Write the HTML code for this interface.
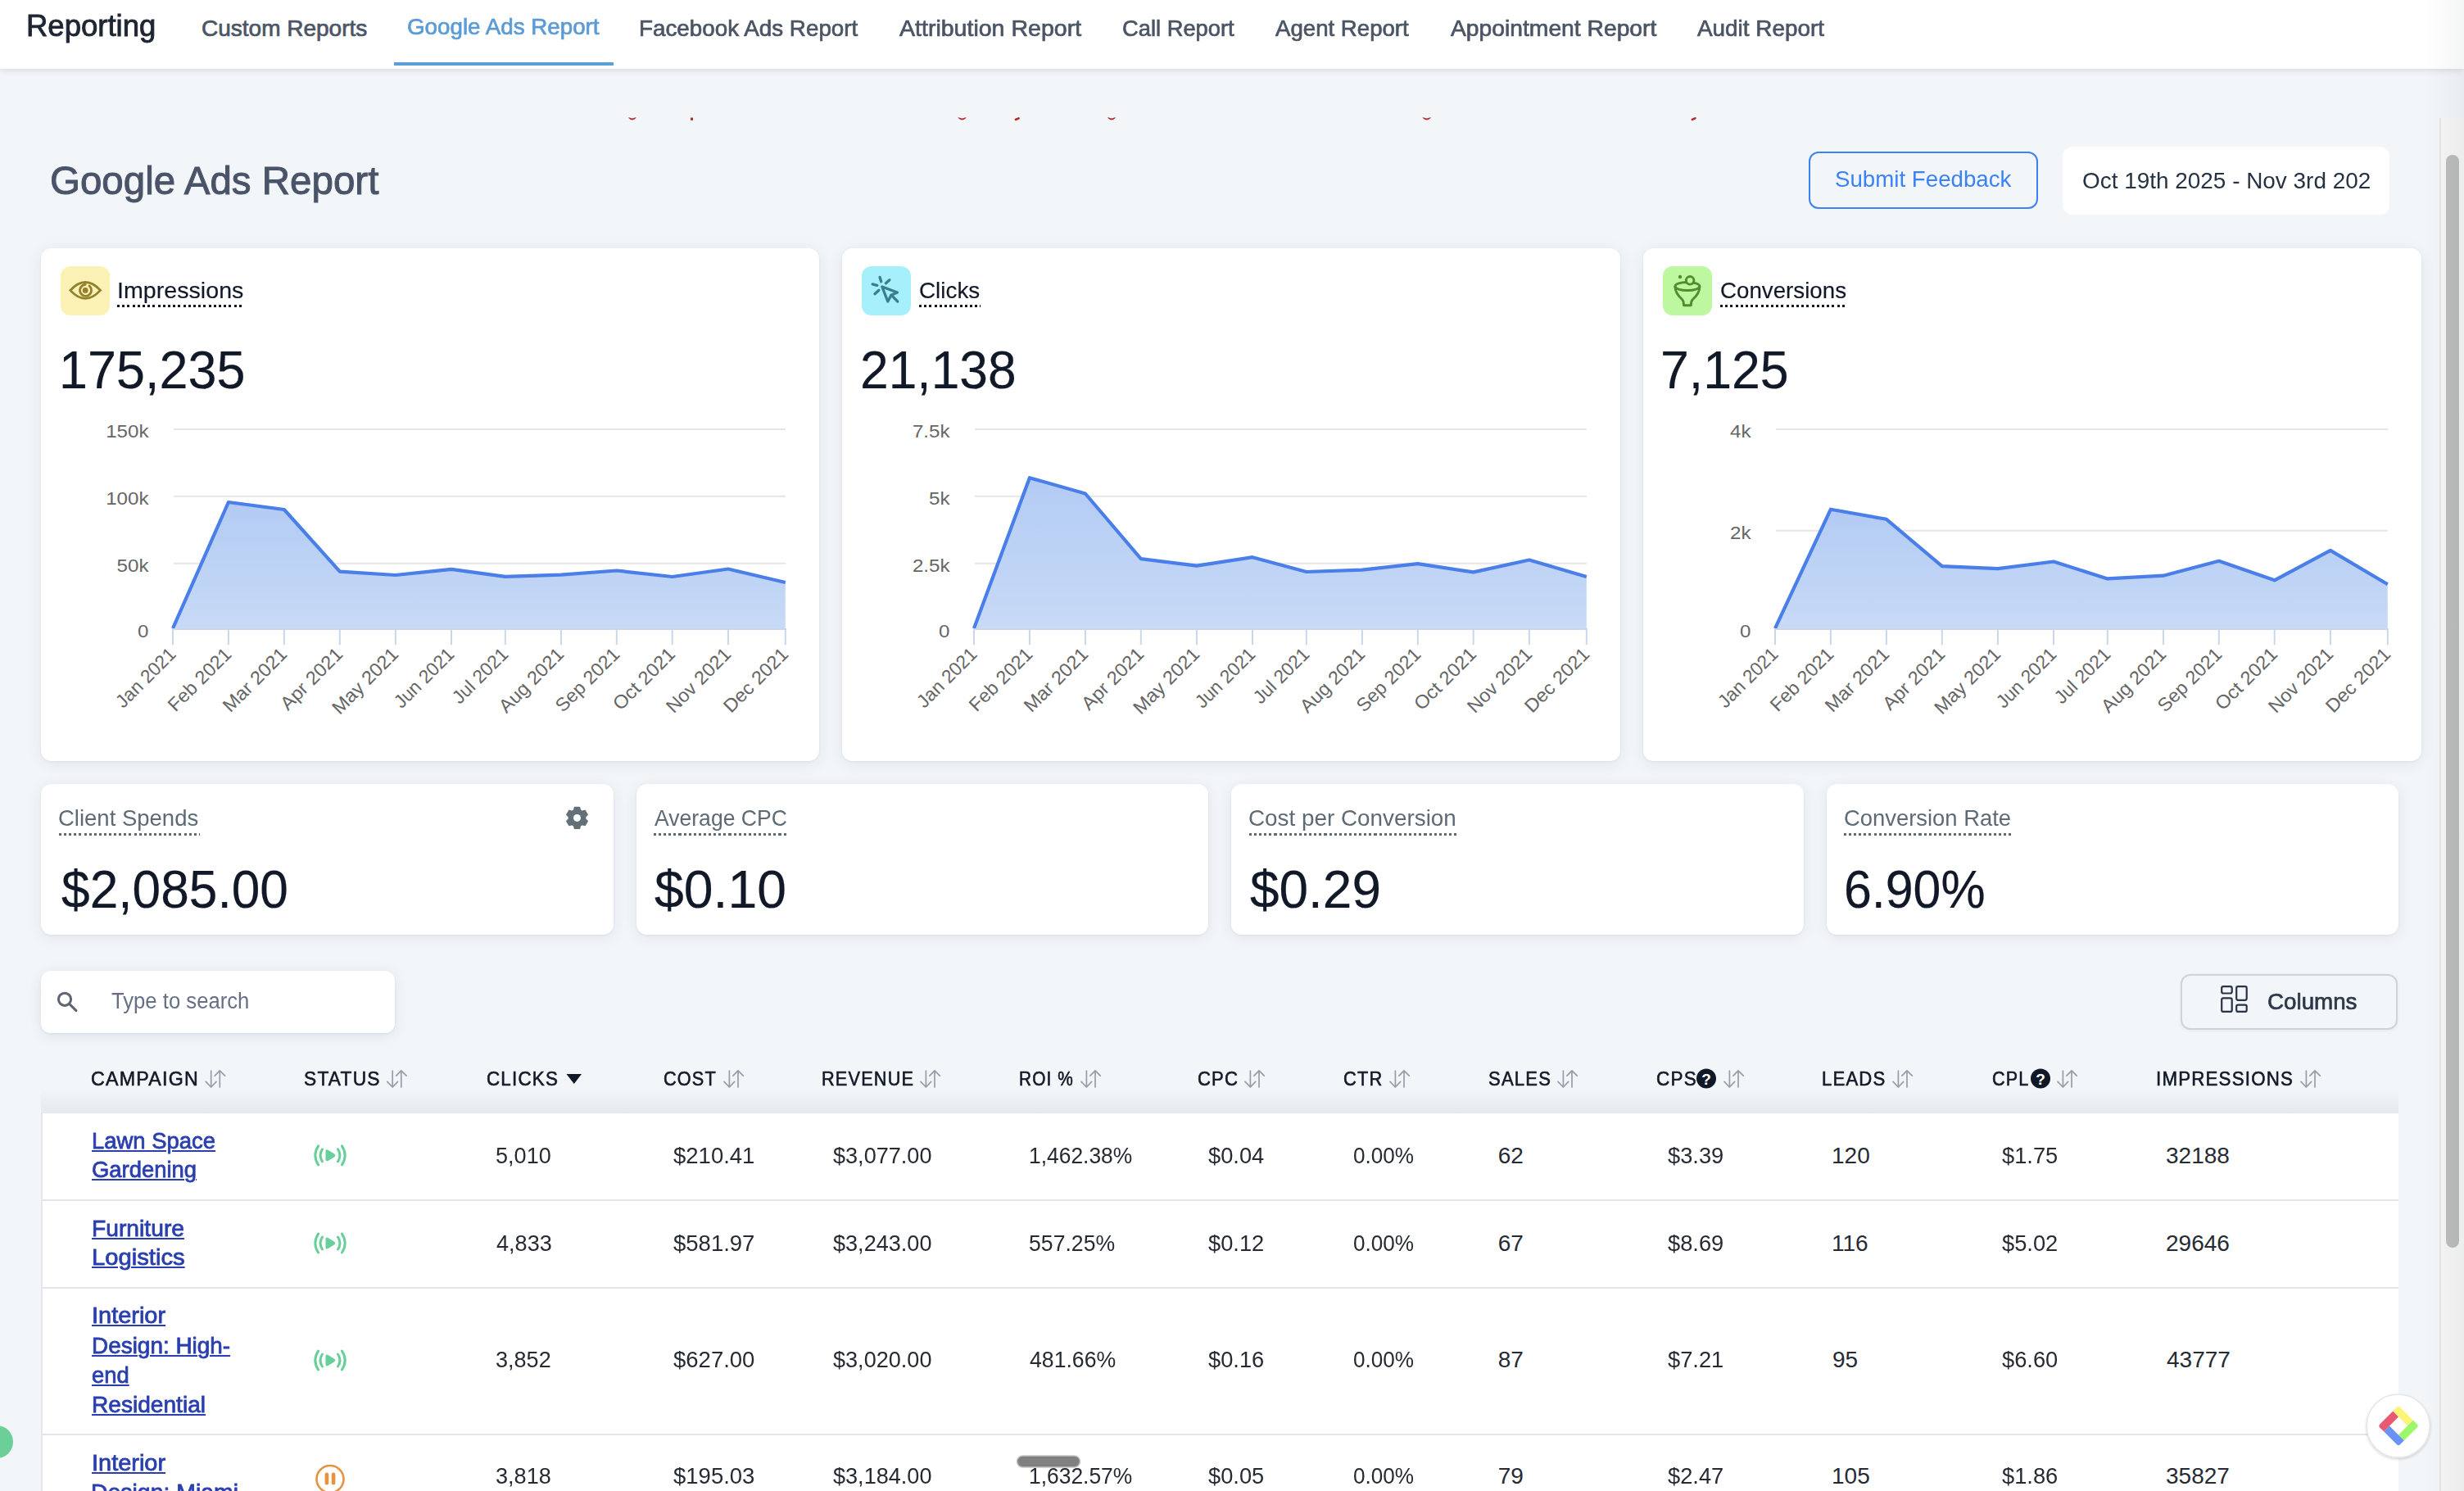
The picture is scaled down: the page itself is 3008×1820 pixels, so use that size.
<!DOCTYPE html>
<html><head><meta charset="utf-8"><title>Google Ads Report</title>
<style>
html,body{margin:0;padding:0;}
body{width:3008px;height:1820px;overflow:hidden;position:relative;background:#f2f6f9;font-family:"Liberation Sans", sans-serif;}
.t{position:absolute;white-space:nowrap;}
.r{position:absolute;}
</style></head>
<body>
<div class="r" style="left:0px;top:0px;width:3008px;height:84px;background:#fff;box-shadow:0 2px 8px rgba(30,40,60,0.13);z-index:2;"></div>
<div style="position:absolute;left:0;top:0;width:3008px;height:84px;z-index:3">
<div id="h_rep" class="t" style="left:31.98px;top:13.73px;font-size:36px;line-height:36px;color:#1e2633;font-weight:400;-webkit-text-stroke:0.9px #1e2633;transform:scaleX(1.0144);transform-origin:0 0;">Reporting</div>
<div id="nav0" class="t" style="left:246.00px;top:21.30px;font-size:28px;line-height:28px;color:#4b5565;font-weight:400;-webkit-text-stroke:0.7px #4b5565;">Custom Reports</div>
<div id="nav1" class="t" style="left:497.01px;top:19.30px;font-size:28px;line-height:28px;color:#5b9bd5;font-weight:400;-webkit-text-stroke:0.7px #5b9bd5;transform:scaleX(0.9915);transform-origin:0 0;">Google Ads Report</div>
<div id="nav2" class="t" style="left:780.01px;top:21.30px;font-size:28px;line-height:28px;color:#4b5565;font-weight:400;-webkit-text-stroke:0.7px #4b5565;transform:scaleX(0.9926);transform-origin:0 0;">Facebook Ads Report</div>
<div id="nav3" class="t" style="left:1098.21px;top:21.30px;font-size:28px;line-height:28px;color:#4b5565;font-weight:400;-webkit-text-stroke:0.7px #4b5565;transform:scaleX(1.0192);transform-origin:0 0;">Attribution Report</div>
<div id="nav4" class="t" style="left:1370.00px;top:21.30px;font-size:28px;line-height:28px;color:#4b5565;font-weight:400;-webkit-text-stroke:0.7px #4b5565;transform:scaleX(0.9759);transform-origin:0 0;">Call Report</div>
<div id="nav5" class="t" style="left:1557.38px;top:21.30px;font-size:28px;line-height:28px;color:#4b5565;font-weight:400;-webkit-text-stroke:0.7px #4b5565;transform:scaleX(0.9862);transform-origin:0 0;">Agent Report</div>
<div id="nav6" class="t" style="left:1770.79px;top:21.30px;font-size:28px;line-height:28px;color:#4b5565;font-weight:400;-webkit-text-stroke:0.7px #4b5565;transform:scaleX(1.0092);transform-origin:0 0;">Appointment Report</div>
<div id="nav7" class="t" style="left:2072.38px;top:21.30px;font-size:28px;line-height:28px;color:#4b5565;font-weight:400;-webkit-text-stroke:0.7px #4b5565;transform:scaleX(0.9956);transform-origin:0 0;">Audit Report</div>
<div class="r" style="left:481px;top:76px;width:268px;height:4px;background:#5b9fd9;"></div>
</div>
<svg class="r" style="left:0;top:0;width:3008px;height:160px" viewBox="0 0 3008 160"><path d="M766.8 143.6 Q771.9 149.2 777 143.6 L774.8 143.6 Q771.9 145.6 769.0 143.6 Z" fill="#b9292c"/><rect x="843" y="143.6" width="3" height="3.3" fill="#b9292c"/><path d="M1169 143.6 Q1174.5 149.2 1180 143.6 L1177.8 143.6 Q1174.5 145.6 1171.2 143.6 Z" fill="#b9292c"/><path d="M1239.9 146.0 L1243.6 144.4" stroke="#b9292c" stroke-width="2.6" stroke-linecap="round" fill="none"/><path d="M1351.7 143.6 Q1357.0500000000002 149.2 1362.4 143.6 L1360.2 143.6 Q1357.0500000000002 145.6 1353.9 143.6 Z" fill="#b9292c"/><path d="M1736.2 143.6 Q1741.75 149.2 1747.3 143.6 L1745.1 143.6 Q1741.75 145.6 1738.4 143.6 Z" fill="#b9292c"/><path d="M2065.7999999999997 146.0 L2069.4 144.4" stroke="#b9292c" stroke-width="2.6" stroke-linecap="round" fill="none"/></svg>
<div id="title" class="t" style="left:61.01px;top:196.57px;font-size:48px;line-height:48px;color:#4a5468;font-weight:400;-webkit-text-stroke:1.0px #4a5468;transform:scaleX(0.9896);transform-origin:0 0;">Google Ads Report</div>
<div class="r" style="left:2208px;top:185px;width:280px;height:70px;box-sizing:border-box;border:2px solid #3b82f6;border-radius:12px;"></div>
<div id="submit" class="t" style="left:2240.01px;top:205.20px;font-size:28px;line-height:28px;color:#3b82f6;font-weight:400;transform:scaleX(0.9885);transform-origin:0 0;">Submit Feedback</div>
<div class="r" style="left:2518px;top:179px;width:399px;height:83px;background:#fff;border-radius:12px;"></div>
<div style="position:absolute;left:2518px;top:179px;width:376px;height:83px;overflow:hidden">
<div id="date" class="t" style="left:24.00px;top:28.30px;font-size:28px;line-height:28px;color:#243244;font-weight:400;transform:scaleX(0.997);transform-origin:0 0;">Oct 19th 2025 - Nov 3rd 2025</div>
</div>
<div class="r" style="left:2960px;top:0px;width:48px;height:1820px;background:linear-gradient(90deg,rgba(0,0,0,0) 0%,rgba(20,30,50,0.045) 100%);z-index:4;"></div>
<div class="r" style="left:2978px;top:144px;width:30px;height:1676px;background:#f6f6f6;border-left:2px solid #e6e6e6;box-sizing:border-box;"></div>
<div class="r" style="left:2986px;top:189px;width:16px;height:1334px;background:#bdbdbd;border-radius:8px;"></div>
<div class="r" style="left:50px;top:303px;width:950px;height:626px;background:#fff;border-radius:13px;box-shadow:0 1px 3px rgba(30,45,70,0.05),0 3px 18px rgba(30,45,70,0.085);"></div>
<div class="r" style="left:74px;top:325px;width:60px;height:60px;background:#fdf2b6;border-radius:12px;"></div>
<div id="ct0" class="t" style="left:142.75px;top:340.70px;font-size:28px;line-height:28px;color:#111827;font-weight:400;-webkit-text-stroke:0.15px #111827;transform:scaleX(1.0228);transform-origin:0 0;">Impressions</div>
<div class="r" style="left:143.4px;top:372.3px;width:154.4px;height:3px;background:repeating-linear-gradient(90deg,#111827 0 3px,transparent 3px 6.2px);"></div>
<div id="cn0" class="t" style="left:72.07px;top:420.02px;font-size:64px;line-height:64px;color:#111827;font-weight:400;-webkit-text-stroke:0.2px #111827;transform:scaleX(0.9836);transform-origin:0 0;">175,235</div>
<div class="r" style="left:1028px;top:303px;width:950px;height:626px;background:#fff;border-radius:13px;box-shadow:0 1px 3px rgba(30,45,70,0.05),0 3px 18px rgba(30,45,70,0.085);"></div>
<div class="r" style="left:1052px;top:325px;width:60px;height:60px;background:#a6f0fb;border-radius:12px;"></div>
<div id="ct1" class="t" style="left:1122.39px;top:340.70px;font-size:28px;line-height:28px;color:#111827;font-weight:400;-webkit-text-stroke:0.15px #111827;transform:scaleX(0.9945);transform-origin:0 0;">Clicks</div>
<div class="r" style="left:1122.2px;top:372.3px;width:74.59999999999991px;height:3px;background:repeating-linear-gradient(90deg,#111827 0 3px,transparent 3px 6.2px);"></div>
<div id="cn1" class="t" style="left:1050.08px;top:420.02px;font-size:64px;line-height:64px;color:#111827;font-weight:400;-webkit-text-stroke:0.2px #111827;transform:scaleX(0.9743);transform-origin:0 0;">21,138</div>
<div class="r" style="left:2006px;top:303px;width:950px;height:626px;background:#fff;border-radius:13px;box-shadow:0 1px 3px rgba(30,45,70,0.05),0 3px 18px rgba(30,45,70,0.085);"></div>
<div class="r" style="left:2030px;top:325px;width:60px;height:60px;background:#bdf79f;border-radius:12px;"></div>
<div id="ct2" class="t" style="left:2100.01px;top:340.70px;font-size:28px;line-height:28px;color:#111827;font-weight:400;-webkit-text-stroke:0.15px #111827;transform:scaleX(0.9896);transform-origin:0 0;">Conversions</div>
<div class="r" style="left:2100px;top:372.3px;width:154.4000000000001px;height:3px;background:repeating-linear-gradient(90deg,#111827 0 3px,transparent 3px 6.2px);"></div>
<div id="cn2" class="t" style="left:2027.45px;top:420.02px;font-size:64px;line-height:64px;color:#111827;font-weight:400;-webkit-text-stroke:0.2px #111827;transform:scaleX(0.9781);transform-origin:0 0;">7,125</div>
<div class="r" style="left:50px;top:957px;width:698.5px;height:184px;background:#fff;border-radius:13px;box-shadow:0 1px 3px rgba(30,45,70,0.05),0 3px 18px rgba(30,45,70,0.085);"></div>
<div id="sl0" class="t" style="left:71.41px;top:985.20px;font-size:28px;line-height:28px;color:#5e6b75;font-weight:400;transform:scaleX(0.9821);transform-origin:0 0;">Client Spends</div>
<div class="r" style="left:72.2px;top:1016.8px;width:171.89999999999998px;height:3px;background:repeating-linear-gradient(90deg,#5e6b75 0 3px,transparent 3px 6.1px);"></div>
<div id="sv0" class="t" style="left:75.00px;top:1053.52px;font-size:64px;line-height:64px;color:#111827;font-weight:400;-webkit-text-stroke:0.2px #111827;transform:scaleX(0.9728);transform-origin:0 0;">$2,085.00</div>
<div class="r" style="left:776.5px;top:957px;width:698.5px;height:184px;background:#fff;border-radius:13px;box-shadow:0 1px 3px rgba(30,45,70,0.05),0 3px 18px rgba(30,45,70,0.085);"></div>
<div id="sl1" class="t" style="left:798.97px;top:985.20px;font-size:28px;line-height:28px;color:#5e6b75;font-weight:400;transform:scaleX(0.9482);transform-origin:0 0;">Average CPC</div>
<div class="r" style="left:798.0px;top:1016.8px;width:163.20000000000005px;height:3px;background:repeating-linear-gradient(90deg,#5e6b75 0 3px,transparent 3px 6.1px);"></div>
<div id="sv1" class="t" style="left:799.39px;top:1053.52px;font-size:64px;line-height:64px;color:#111827;font-weight:400;-webkit-text-stroke:0.2px #111827;transform:scaleX(1.0051);transform-origin:0 0;">$0.10</div>
<div class="r" style="left:1503px;top:957px;width:698.5px;height:184px;background:#fff;border-radius:13px;box-shadow:0 1px 3px rgba(30,45,70,0.05),0 3px 18px rgba(30,45,70,0.085);"></div>
<div id="sl2" class="t" style="left:1524.01px;top:985.20px;font-size:28px;line-height:28px;color:#5e6b75;font-weight:400;transform:scaleX(0.9945);transform-origin:0 0;">Cost per Conversion</div>
<div class="r" style="left:1524.5px;top:1016.8px;width:253.5999999999999px;height:3px;background:repeating-linear-gradient(90deg,#5e6b75 0 3px,transparent 3px 6.1px);"></div>
<div id="sv2" class="t" style="left:1526.00px;top:1053.52px;font-size:64px;line-height:64px;color:#111827;font-weight:400;-webkit-text-stroke:0.2px #111827;transform:scaleX(0.9987);transform-origin:0 0;">$0.29</div>
<div class="r" style="left:2229.5px;top:957px;width:698.5px;height:184px;background:#fff;border-radius:13px;box-shadow:0 1px 3px rgba(30,45,70,0.05),0 3px 18px rgba(30,45,70,0.085);"></div>
<div id="sl3" class="t" style="left:2251.01px;top:985.20px;font-size:28px;line-height:28px;color:#5e6b75;font-weight:400;transform:scaleX(0.9783);transform-origin:0 0;">Conversion Rate</div>
<div class="r" style="left:2251.0px;top:1016.8px;width:204.5px;height:3px;background:repeating-linear-gradient(90deg,#5e6b75 0 3px,transparent 3px 6.1px);"></div>
<div id="sv3" class="t" style="left:2250.50px;top:1053.52px;font-size:64px;line-height:64px;color:#111827;font-weight:400;-webkit-text-stroke:0.2px #111827;transform:scaleX(0.9508);transform-origin:0 0;">6.90%</div>
<div class="r" style="left:50px;top:1185px;width:432px;height:76px;background:#fff;border-radius:12px;box-shadow:0 1px 3px rgba(30,45,70,0.06),0 3px 16px rgba(30,45,70,0.10);"></div>
<div id="search" class="t" style="left:136.40px;top:1208.74px;font-size:27px;line-height:27px;color:#667085;font-weight:400;transform:scaleX(0.9506);transform-origin:0 0;">Type to search</div>
<div class="r" style="left:2662px;top:1189px;width:265px;height:68px;box-sizing:border-box;border:2px solid #cfd3da;border-radius:12px;box-shadow:0 1px 4px rgba(40,55,80,0.06);"></div>
<div id="columns" class="t" style="left:2768.00px;top:1208.60px;font-size:28px;line-height:28px;color:#2d3748;font-weight:400;-webkit-text-stroke:0.7px #2d3748;transform:scaleX(0.9909);transform-origin:0 0;">Columns</div>
<div class="r" style="left:50px;top:1359px;width:2878px;height:461px;background:#fff;border-left:2px solid #e3e6ea;box-sizing:border-box;"></div>
<div class="r" style="left:50px;top:1328px;width:2878px;height:31px;background:linear-gradient(180deg,rgba(225,229,235,0) 0%,rgba(225,229,235,0.75) 100%);"></div>
<div id="th0" class="t" style="left:111.21px;top:1304.98px;font-size:24px;line-height:24px;color:#111827;font-weight:400;-webkit-text-stroke:0.6px #111827;transform:scaleX(0.9657);transform-origin:0 0;letter-spacing:1.3px;">CAMPAIGN</div>
<div id="th1" class="t" style="left:371.22px;top:1304.98px;font-size:24px;line-height:24px;color:#111827;font-weight:400;-webkit-text-stroke:0.6px #111827;transform:scaleX(0.9474);transform-origin:0 0;letter-spacing:1.3px;">STATUS</div>
<div id="th2" class="t" style="left:593.65px;top:1304.98px;font-size:24px;line-height:24px;color:#111827;font-weight:400;-webkit-text-stroke:0.6px #111827;transform:scaleX(0.9315);transform-origin:0 0;letter-spacing:1.3px;">CLICKS</div>
<div id="th3" class="t" style="left:809.80px;top:1304.98px;font-size:24px;line-height:24px;color:#111827;font-weight:400;-webkit-text-stroke:0.6px #111827;transform:scaleX(0.9028);transform-origin:0 0;letter-spacing:1.3px;">COST</div>
<div id="th4" class="t" style="left:1003.10px;top:1304.98px;font-size:24px;line-height:24px;color:#111827;font-weight:400;-webkit-text-stroke:0.6px #111827;transform:scaleX(0.9049);transform-origin:0 0;letter-spacing:1.3px;">REVENUE</div>
<div id="th5" class="t" style="left:1244.13px;top:1304.98px;font-size:24px;line-height:24px;color:#111827;font-weight:400;-webkit-text-stroke:0.6px #111827;transform:scaleX(0.8667);transform-origin:0 0;letter-spacing:1.3px;">ROI %</div>
<div id="th6" class="t" style="left:1461.61px;top:1304.98px;font-size:24px;line-height:24px;color:#111827;font-weight:400;-webkit-text-stroke:0.6px #111827;transform:scaleX(0.9189);transform-origin:0 0;letter-spacing:1.3px;">CPC</div>
<div id="th7" class="t" style="left:1640.42px;top:1304.98px;font-size:24px;line-height:24px;color:#111827;font-weight:400;-webkit-text-stroke:0.6px #111827;transform:scaleX(0.9078);transform-origin:0 0;letter-spacing:1.3px;">CTR</div>
<div id="th8" class="t" style="left:1817.00px;top:1304.98px;font-size:24px;line-height:24px;color:#111827;font-weight:400;-webkit-text-stroke:0.6px #111827;transform:scaleX(0.9183);transform-origin:0 0;letter-spacing:1.3px;">SALES</div>
<div id="th9" class="t" style="left:2022.03px;top:1304.98px;font-size:24px;line-height:24px;color:#111827;font-weight:400;-webkit-text-stroke:0.6px #111827;transform:scaleX(0.9360);transform-origin:0 0;letter-spacing:1.3px;">CPS</div>
<div id="th10" class="t" style="left:2224.08px;top:1304.98px;font-size:24px;line-height:24px;color:#111827;font-weight:400;-webkit-text-stroke:0.6px #111827;transform:scaleX(0.9205);transform-origin:0 0;letter-spacing:1.3px;">LEADS</div>
<div id="th11" class="t" style="left:2432.00px;top:1304.98px;font-size:24px;line-height:24px;color:#111827;font-weight:400;-webkit-text-stroke:0.6px #111827;transform:scaleX(0.8960);transform-origin:0 0;letter-spacing:1.3px;">CPL</div>
<div id="th12" class="t" style="left:2632.07px;top:1304.98px;font-size:24px;line-height:24px;color:#111827;font-weight:400;-webkit-text-stroke:0.6px #111827;transform:scaleX(0.9285);transform-origin:0 0;letter-spacing:1.3px;">IMPRESSIONS</div>
<div class="r" style="left:52px;top:1464px;width:2876px;height:2px;background:#e3e5e8;"></div>
<div class="r" style="left:52px;top:1571px;width:2876px;height:2px;background:#e3e5e8;"></div>
<div class="r" style="left:52px;top:1750px;width:2876px;height:2px;background:#e3e5e8;"></div>
<div id="r0l0" class="t" style="left:112.00px;top:1378.50px;font-size:28px;line-height:28px;color:#2a3fae;font-weight:400;-webkit-text-stroke:0.8px #2a3fae;transform:scaleX(0.9799);transform-origin:0 0;text-decoration:underline;text-decoration-thickness:2px;text-underline-offset:2px;">Lawn Space</div>
<div id="r0l1" class="t" style="left:112.00px;top:1414.40px;font-size:28px;line-height:28px;color:#2a3fae;font-weight:400;-webkit-text-stroke:0.8px #2a3fae;transform:scaleX(0.9786);transform-origin:0 0;text-decoration:underline;text-decoration-thickness:2px;text-underline-offset:2px;">Gardening</div>
<div id="r0v0" class="t" style="left:605.03px;top:1396.80px;font-size:28px;line-height:28px;color:#262b33;font-weight:400;transform:scaleX(0.9667);transform-origin:0 0;">5,010</div>
<div id="r0v1" class="t" style="left:822.00px;top:1396.80px;font-size:28px;line-height:28px;color:#262b33;font-weight:400;transform:scaleX(0.9822);transform-origin:0 0;">$210.41</div>
<div id="r0v2" class="t" style="left:1016.78px;top:1396.80px;font-size:28px;line-height:28px;color:#262b33;font-weight:400;transform:scaleX(0.9672);transform-origin:0 0;">$3,077.00</div>
<div id="r0v3" class="t" style="left:1256.06px;top:1396.80px;font-size:28px;line-height:28px;color:#262b33;font-weight:400;transform:scaleX(0.9429);transform-origin:0 0;">1,462.38%</div>
<div id="r0v4" class="t" style="left:1474.60px;top:1396.80px;font-size:28px;line-height:28px;color:#262b33;font-weight:400;transform:scaleX(0.9743);transform-origin:0 0;">$0.04</div>
<div id="r0v5" class="t" style="left:1652.00px;top:1396.80px;font-size:28px;line-height:28px;color:#262b33;font-weight:400;transform:scaleX(0.9329);transform-origin:0 0;">0.00%</div>
<div id="r0v6" class="t" style="left:1828.79px;top:1396.80px;font-size:28px;line-height:28px;color:#262b33;font-weight:400;">62</div>
<div id="r0v7" class="t" style="left:2035.99px;top:1396.80px;font-size:28px;line-height:28px;color:#262b33;font-weight:400;transform:scaleX(0.9743);transform-origin:0 0;">$3.39</div>
<div id="r0v8" class="t" style="left:2236.00px;top:1396.80px;font-size:28px;line-height:28px;color:#262b33;font-weight:400;">120</div>
<div id="r0v9" class="t" style="left:2444.38px;top:1396.80px;font-size:28px;line-height:28px;color:#262b33;font-weight:400;transform:scaleX(0.9743);transform-origin:0 0;">$1.75</div>
<div id="r0v10" class="t" style="left:2644.00px;top:1396.80px;font-size:28px;line-height:28px;color:#262b33;font-weight:400;">32188</div>
<div id="r1l0" class="t" style="left:112.00px;top:1485.80px;font-size:28px;line-height:28px;color:#2a3fae;font-weight:400;-webkit-text-stroke:0.8px #2a3fae;transform:scaleX(1.0089);transform-origin:0 0;text-decoration:underline;text-decoration-thickness:2px;text-underline-offset:2px;">Furniture</div>
<div id="r1l1" class="t" style="left:112.00px;top:1521.10px;font-size:28px;line-height:28px;color:#2a3fae;font-weight:400;-webkit-text-stroke:0.8px #2a3fae;transform:scaleX(1.0431);transform-origin:0 0;text-decoration:underline;text-decoration-thickness:2px;text-underline-offset:2px;">Logistics</div>
<div id="r1v0" class="t" style="left:606.00px;top:1503.60px;font-size:28px;line-height:28px;color:#262b33;font-weight:400;transform:scaleX(0.9671);transform-origin:0 0;">4,833</div>
<div id="r1v1" class="t" style="left:822.00px;top:1503.60px;font-size:28px;line-height:28px;color:#262b33;font-weight:400;transform:scaleX(0.9822);transform-origin:0 0;">$581.97</div>
<div id="r1v2" class="t" style="left:1016.78px;top:1503.60px;font-size:28px;line-height:28px;color:#262b33;font-weight:400;transform:scaleX(0.9672);transform-origin:0 0;">$3,243.00</div>
<div id="r1v3" class="t" style="left:1256.05px;top:1503.60px;font-size:28px;line-height:28px;color:#262b33;font-weight:400;transform:scaleX(0.9514);transform-origin:0 0;">557.25%</div>
<div id="r1v4" class="t" style="left:1474.60px;top:1503.60px;font-size:28px;line-height:28px;color:#262b33;font-weight:400;transform:scaleX(0.9739);transform-origin:0 0;">$0.12</div>
<div id="r1v5" class="t" style="left:1652.00px;top:1503.60px;font-size:28px;line-height:28px;color:#262b33;font-weight:400;transform:scaleX(0.9329);transform-origin:0 0;">0.00%</div>
<div id="r1v6" class="t" style="left:1828.79px;top:1503.60px;font-size:28px;line-height:28px;color:#262b33;font-weight:400;">67</div>
<div id="r1v7" class="t" style="left:2035.99px;top:1503.60px;font-size:28px;line-height:28px;color:#262b33;font-weight:400;transform:scaleX(0.9743);transform-origin:0 0;">$8.69</div>
<div id="r1v8" class="t" style="left:2236.00px;top:1503.60px;font-size:28px;line-height:28px;color:#262b33;font-weight:400;">116</div>
<div id="r1v9" class="t" style="left:2444.38px;top:1503.60px;font-size:28px;line-height:28px;color:#262b33;font-weight:400;transform:scaleX(0.9743);transform-origin:0 0;">$5.02</div>
<div id="r1v10" class="t" style="left:2644.00px;top:1503.60px;font-size:28px;line-height:28px;color:#262b33;font-weight:400;">29646</div>
<div id="r2l0" class="t" style="left:112.00px;top:1592.10px;font-size:28px;line-height:28px;color:#2a3fae;font-weight:400;-webkit-text-stroke:0.8px #2a3fae;transform:scaleX(1.0341);transform-origin:0 0;text-decoration:underline;text-decoration-thickness:2px;text-underline-offset:2px;">Interior</div>
<div id="r2l1" class="t" style="left:112.00px;top:1628.50px;font-size:28px;line-height:28px;color:#2a3fae;font-weight:400;-webkit-text-stroke:0.8px #2a3fae;transform:scaleX(0.9971);transform-origin:0 0;text-decoration:underline;text-decoration-thickness:2px;text-underline-offset:2px;">Design: High-</div>
<div id="r2l2" class="t" style="left:112.00px;top:1664.70px;font-size:28px;line-height:28px;color:#2a3fae;font-weight:400;-webkit-text-stroke:0.8px #2a3fae;transform:scaleX(0.9787);transform-origin:0 0;text-decoration:underline;text-decoration-thickness:2px;text-underline-offset:2px;">end</div>
<div id="r2l3" class="t" style="left:112.00px;top:1700.90px;font-size:28px;line-height:28px;color:#2a3fae;font-weight:400;-webkit-text-stroke:0.8px #2a3fae;transform:scaleX(1.0036);transform-origin:0 0;text-decoration:underline;text-decoration-thickness:2px;text-underline-offset:2px;">Residential</div>
<div id="r2v0" class="t" style="left:605.03px;top:1646.30px;font-size:28px;line-height:28px;color:#262b33;font-weight:400;transform:scaleX(0.9662);transform-origin:0 0;">3,852</div>
<div id="r2v1" class="t" style="left:822.00px;top:1646.30px;font-size:28px;line-height:28px;color:#262b33;font-weight:400;transform:scaleX(0.9822);transform-origin:0 0;">$627.00</div>
<div id="r2v2" class="t" style="left:1016.78px;top:1646.30px;font-size:28px;line-height:28px;color:#262b33;font-weight:400;transform:scaleX(0.9672);transform-origin:0 0;">$3,020.00</div>
<div id="r2v3" class="t" style="left:1257.00px;top:1646.30px;font-size:28px;line-height:28px;color:#262b33;font-weight:400;transform:scaleX(0.9518);transform-origin:0 0;">481.66%</div>
<div id="r2v4" class="t" style="left:1474.60px;top:1646.30px;font-size:28px;line-height:28px;color:#262b33;font-weight:400;transform:scaleX(0.9739);transform-origin:0 0;">$0.16</div>
<div id="r2v5" class="t" style="left:1652.00px;top:1646.30px;font-size:28px;line-height:28px;color:#262b33;font-weight:400;transform:scaleX(0.9329);transform-origin:0 0;">0.00%</div>
<div id="r2v6" class="t" style="left:1828.79px;top:1646.30px;font-size:28px;line-height:28px;color:#262b33;font-weight:400;">87</div>
<div id="r2v7" class="t" style="left:2035.99px;top:1646.30px;font-size:28px;line-height:28px;color:#262b33;font-weight:400;transform:scaleX(0.9743);transform-origin:0 0;">$7.21</div>
<div id="r2v8" class="t" style="left:2237.00px;top:1646.30px;font-size:28px;line-height:28px;color:#262b33;font-weight:400;">95</div>
<div id="r2v9" class="t" style="left:2444.38px;top:1646.30px;font-size:28px;line-height:28px;color:#262b33;font-weight:400;transform:scaleX(0.9743);transform-origin:0 0;">$6.60</div>
<div id="r2v10" class="t" style="left:2645.00px;top:1646.30px;font-size:28px;line-height:28px;color:#262b33;font-weight:400;">43777</div>
<div id="r3l0" class="t" style="left:112.00px;top:1771.90px;font-size:28px;line-height:28px;color:#2a3fae;font-weight:400;-webkit-text-stroke:0.8px #2a3fae;transform:scaleX(1.0341);transform-origin:0 0;text-decoration:underline;text-decoration-thickness:2px;text-underline-offset:2px;">Interior</div>
<div id="r3l1" class="t" style="left:110.99px;top:1808.10px;font-size:28px;line-height:28px;color:#2a3fae;font-weight:400;-webkit-text-stroke:0.8px #2a3fae;transform:scaleX(1.0148);transform-origin:0 0;text-decoration:underline;text-decoration-thickness:2px;text-underline-offset:2px;">Design: Miami</div>
<div id="r3v0" class="t" style="left:605.03px;top:1788.30px;font-size:28px;line-height:28px;color:#262b33;font-weight:400;transform:scaleX(0.9667);transform-origin:0 0;">3,818</div>
<div id="r3v1" class="t" style="left:822.00px;top:1788.30px;font-size:28px;line-height:28px;color:#262b33;font-weight:400;transform:scaleX(0.9822);transform-origin:0 0;">$195.03</div>
<div id="r3v2" class="t" style="left:1016.78px;top:1788.30px;font-size:28px;line-height:28px;color:#262b33;font-weight:400;transform:scaleX(0.9672);transform-origin:0 0;">$3,184.00</div>
<div id="r3v3" class="t" style="left:1256.06px;top:1788.30px;font-size:28px;line-height:28px;color:#262b33;font-weight:400;transform:scaleX(0.9429);transform-origin:0 0;">1,632.57%</div>
<div id="r3v4" class="t" style="left:1474.60px;top:1788.30px;font-size:28px;line-height:28px;color:#262b33;font-weight:400;transform:scaleX(0.9739);transform-origin:0 0;">$0.05</div>
<div id="r3v5" class="t" style="left:1652.00px;top:1788.30px;font-size:28px;line-height:28px;color:#262b33;font-weight:400;transform:scaleX(0.9329);transform-origin:0 0;">0.00%</div>
<div id="r3v6" class="t" style="left:1828.79px;top:1788.30px;font-size:28px;line-height:28px;color:#262b33;font-weight:400;">79</div>
<div id="r3v7" class="t" style="left:2035.99px;top:1788.30px;font-size:28px;line-height:28px;color:#262b33;font-weight:400;transform:scaleX(0.9743);transform-origin:0 0;">$2.47</div>
<div id="r3v8" class="t" style="left:2236.00px;top:1788.30px;font-size:28px;line-height:28px;color:#262b33;font-weight:400;">105</div>
<div id="r3v9" class="t" style="left:2444.38px;top:1788.30px;font-size:28px;line-height:28px;color:#262b33;font-weight:400;transform:scaleX(0.9743);transform-origin:0 0;">$1.86</div>
<div id="r3v10" class="t" style="left:2644.00px;top:1788.30px;font-size:28px;line-height:28px;color:#262b33;font-weight:400;">35827</div>
<svg style="position:absolute;left:0;top:0;z-index:1" width="3008" height="1820" viewBox="0 0 3008 1820" font-family='"Liberation Sans", sans-serif'>
<defs><linearGradient id="ag" x1="0" y1="0" x2="0" y2="1"><stop offset="0" stop-color="#b3cbf4"/><stop offset="1" stop-color="#c7daf6"/></linearGradient></defs>
<line x1="212" y1="687.7" x2="959" y2="687.7" stroke="#e6e6e6" stroke-width="2"/>
<line x1="212" y1="605.7" x2="959" y2="605.7" stroke="#e6e6e6" stroke-width="2"/>
<line x1="212" y1="524" x2="959" y2="524" stroke="#e6e6e6" stroke-width="2"/>
<polygon points="211,768 211.0,767.0 278.9,613.0 346.9,622.0 414.8,697.7 482.9,702.0 551.0,694.8 616.8,703.8 684.9,701.6 752.8,696.5 820.7,704.0 888.9,694.5 958.8,711.0 958.8,768" fill="url(#ag)"/>
<polyline points="211.0,767.0 278.9,613.0 346.9,622.0 414.8,697.7 482.9,702.0 551.0,694.8 616.8,703.8 684.9,701.6 752.8,696.5 820.7,704.0 888.9,694.5 958.8,711.0" fill="none" stroke="#4a7ee8" stroke-width="4.2" stroke-linejoin="round" stroke-linecap="butt"/>
<line x1="210" y1="768" x2="960" y2="768" stroke="#ccd6eb" stroke-width="2"/>
<line x1="211" y1="767" x2="211" y2="787" stroke="#ccd6eb" stroke-width="2"/>
<line x1="278.9" y1="767" x2="278.9" y2="787" stroke="#ccd6eb" stroke-width="2"/>
<line x1="346.9" y1="767" x2="346.9" y2="787" stroke="#ccd6eb" stroke-width="2"/>
<line x1="414.8" y1="767" x2="414.8" y2="787" stroke="#ccd6eb" stroke-width="2"/>
<line x1="482.9" y1="767" x2="482.9" y2="787" stroke="#ccd6eb" stroke-width="2"/>
<line x1="551" y1="767" x2="551" y2="787" stroke="#ccd6eb" stroke-width="2"/>
<line x1="616.8" y1="767" x2="616.8" y2="787" stroke="#ccd6eb" stroke-width="2"/>
<line x1="684.9" y1="767" x2="684.9" y2="787" stroke="#ccd6eb" stroke-width="2"/>
<line x1="752.8" y1="767" x2="752.8" y2="787" stroke="#ccd6eb" stroke-width="2"/>
<line x1="820.7" y1="767" x2="820.7" y2="787" stroke="#ccd6eb" stroke-width="2"/>
<line x1="888.9" y1="767" x2="888.9" y2="787" stroke="#ccd6eb" stroke-width="2"/>
<line x1="958.8" y1="767" x2="958.8" y2="787" stroke="#ccd6eb" stroke-width="2"/>
<text x="181.5" y="778.0" font-size="22.4" fill="#666666" text-anchor="end" textLength="13.4" lengthAdjust="spacingAndGlyphs">0</text>
<text x="181.5" y="697.7" font-size="22.4" fill="#666666" text-anchor="end" textLength="38.9" lengthAdjust="spacingAndGlyphs">50k</text>
<text x="181.5" y="615.7" font-size="22.4" fill="#666666" text-anchor="end" textLength="52.3" lengthAdjust="spacingAndGlyphs">100k</text>
<text x="181.5" y="534.0" font-size="22.4" fill="#666666" text-anchor="end" textLength="52.3" lengthAdjust="spacingAndGlyphs">150k</text>
<text x="216.0" y="800" font-size="23" fill="#666666" text-anchor="end" transform="rotate(-45 216.0 800)" textLength="92.5" lengthAdjust="spacingAndGlyphs">Jan 2021</text>
<text x="283.9" y="800" font-size="23" fill="#666666" text-anchor="end" transform="rotate(-45 283.9 800)" textLength="98.5" lengthAdjust="spacingAndGlyphs">Feb 2021</text>
<text x="351.9" y="800" font-size="23" fill="#666666" text-anchor="end" transform="rotate(-45 351.9 800)" textLength="99.8" lengthAdjust="spacingAndGlyphs">Mar 2021</text>
<text x="419.8" y="800" font-size="23" fill="#666666" text-anchor="end" transform="rotate(-45 419.8 800)" textLength="96.5" lengthAdjust="spacingAndGlyphs">Apr 2021</text>
<text x="487.9" y="800" font-size="23" fill="#666666" text-anchor="end" transform="rotate(-45 487.9 800)" textLength="103.6" lengthAdjust="spacingAndGlyphs">May 2021</text>
<text x="556.0" y="800" font-size="23" fill="#666666" text-anchor="end" transform="rotate(-45 556.0 800)" textLength="93.0" lengthAdjust="spacingAndGlyphs">Jun 2021</text>
<text x="621.8" y="800" font-size="23" fill="#666666" text-anchor="end" transform="rotate(-45 621.8 800)" textLength="85.5" lengthAdjust="spacingAndGlyphs">Jul 2021</text>
<text x="689.9" y="800" font-size="23" fill="#666666" text-anchor="end" transform="rotate(-45 689.9 800)" textLength="101.2" lengthAdjust="spacingAndGlyphs">Aug 2021</text>
<text x="757.8" y="800" font-size="23" fill="#666666" text-anchor="end" transform="rotate(-45 757.8 800)" textLength="99.7" lengthAdjust="spacingAndGlyphs">Sep 2021</text>
<text x="825.7" y="800" font-size="23" fill="#666666" text-anchor="end" transform="rotate(-45 825.7 800)" textLength="96.5" lengthAdjust="spacingAndGlyphs">Oct 2021</text>
<text x="893.9" y="800" font-size="23" fill="#666666" text-anchor="end" transform="rotate(-45 893.9 800)" textLength="101.1" lengthAdjust="spacingAndGlyphs">Nov 2021</text>
<text x="963.8" y="800" font-size="23" fill="#666666" text-anchor="end" transform="rotate(-45 963.8 800)" textLength="100.8" lengthAdjust="spacingAndGlyphs">Dec 2021</text>
<line x1="1190" y1="687.7" x2="1937" y2="687.7" stroke="#e6e6e6" stroke-width="2"/>
<line x1="1190" y1="605.7" x2="1937" y2="605.7" stroke="#e6e6e6" stroke-width="2"/>
<line x1="1190" y1="524" x2="1937" y2="524" stroke="#e6e6e6" stroke-width="2"/>
<polygon points="1189,768 1189.0,767.0 1256.9,583.2 1324.9,602.5 1392.8,682.2 1460.9,690.7 1529.0,680.2 1594.8,698.0 1662.9,695.6 1730.8,688.1 1798.7,698.4 1866.9,683.5 1936.8,704.0 1936.8,768" fill="url(#ag)"/>
<polyline points="1189.0,767.0 1256.9,583.2 1324.9,602.5 1392.8,682.2 1460.9,690.7 1529.0,680.2 1594.8,698.0 1662.9,695.6 1730.8,688.1 1798.7,698.4 1866.9,683.5 1936.8,704.0" fill="none" stroke="#4a7ee8" stroke-width="4.2" stroke-linejoin="round" stroke-linecap="butt"/>
<line x1="1188" y1="768" x2="1938" y2="768" stroke="#ccd6eb" stroke-width="2"/>
<line x1="1189" y1="767" x2="1189" y2="787" stroke="#ccd6eb" stroke-width="2"/>
<line x1="1256.9" y1="767" x2="1256.9" y2="787" stroke="#ccd6eb" stroke-width="2"/>
<line x1="1324.9" y1="767" x2="1324.9" y2="787" stroke="#ccd6eb" stroke-width="2"/>
<line x1="1392.8" y1="767" x2="1392.8" y2="787" stroke="#ccd6eb" stroke-width="2"/>
<line x1="1460.9" y1="767" x2="1460.9" y2="787" stroke="#ccd6eb" stroke-width="2"/>
<line x1="1529" y1="767" x2="1529" y2="787" stroke="#ccd6eb" stroke-width="2"/>
<line x1="1594.8" y1="767" x2="1594.8" y2="787" stroke="#ccd6eb" stroke-width="2"/>
<line x1="1662.9" y1="767" x2="1662.9" y2="787" stroke="#ccd6eb" stroke-width="2"/>
<line x1="1730.8" y1="767" x2="1730.8" y2="787" stroke="#ccd6eb" stroke-width="2"/>
<line x1="1798.7" y1="767" x2="1798.7" y2="787" stroke="#ccd6eb" stroke-width="2"/>
<line x1="1866.9" y1="767" x2="1866.9" y2="787" stroke="#ccd6eb" stroke-width="2"/>
<line x1="1936.8" y1="767" x2="1936.8" y2="787" stroke="#ccd6eb" stroke-width="2"/>
<text x="1159.5" y="778.0" font-size="22.4" fill="#666666" text-anchor="end" textLength="13.4" lengthAdjust="spacingAndGlyphs">0</text>
<text x="1159.5" y="697.7" font-size="22.4" fill="#666666" text-anchor="end" textLength="45.6" lengthAdjust="spacingAndGlyphs">2.5k</text>
<text x="1159.5" y="615.7" font-size="22.4" fill="#666666" text-anchor="end" textLength="25.5" lengthAdjust="spacingAndGlyphs">5k</text>
<text x="1159.5" y="534.0" font-size="22.4" fill="#666666" text-anchor="end" textLength="45.6" lengthAdjust="spacingAndGlyphs">7.5k</text>
<text x="1194.0" y="800" font-size="23" fill="#666666" text-anchor="end" transform="rotate(-45 1194.0 800)" textLength="92.5" lengthAdjust="spacingAndGlyphs">Jan 2021</text>
<text x="1261.9" y="800" font-size="23" fill="#666666" text-anchor="end" transform="rotate(-45 1261.9 800)" textLength="98.5" lengthAdjust="spacingAndGlyphs">Feb 2021</text>
<text x="1329.9" y="800" font-size="23" fill="#666666" text-anchor="end" transform="rotate(-45 1329.9 800)" textLength="99.8" lengthAdjust="spacingAndGlyphs">Mar 2021</text>
<text x="1397.8" y="800" font-size="23" fill="#666666" text-anchor="end" transform="rotate(-45 1397.8 800)" textLength="96.5" lengthAdjust="spacingAndGlyphs">Apr 2021</text>
<text x="1465.9" y="800" font-size="23" fill="#666666" text-anchor="end" transform="rotate(-45 1465.9 800)" textLength="103.6" lengthAdjust="spacingAndGlyphs">May 2021</text>
<text x="1534.0" y="800" font-size="23" fill="#666666" text-anchor="end" transform="rotate(-45 1534.0 800)" textLength="93.0" lengthAdjust="spacingAndGlyphs">Jun 2021</text>
<text x="1599.8" y="800" font-size="23" fill="#666666" text-anchor="end" transform="rotate(-45 1599.8 800)" textLength="85.5" lengthAdjust="spacingAndGlyphs">Jul 2021</text>
<text x="1667.9" y="800" font-size="23" fill="#666666" text-anchor="end" transform="rotate(-45 1667.9 800)" textLength="101.2" lengthAdjust="spacingAndGlyphs">Aug 2021</text>
<text x="1735.8" y="800" font-size="23" fill="#666666" text-anchor="end" transform="rotate(-45 1735.8 800)" textLength="99.7" lengthAdjust="spacingAndGlyphs">Sep 2021</text>
<text x="1803.7" y="800" font-size="23" fill="#666666" text-anchor="end" transform="rotate(-45 1803.7 800)" textLength="96.5" lengthAdjust="spacingAndGlyphs">Oct 2021</text>
<text x="1871.9" y="800" font-size="23" fill="#666666" text-anchor="end" transform="rotate(-45 1871.9 800)" textLength="101.1" lengthAdjust="spacingAndGlyphs">Nov 2021</text>
<text x="1941.8" y="800" font-size="23" fill="#666666" text-anchor="end" transform="rotate(-45 1941.8 800)" textLength="100.8" lengthAdjust="spacingAndGlyphs">Dec 2021</text>
<line x1="2168" y1="647.8" x2="2915" y2="647.8" stroke="#e6e6e6" stroke-width="2"/>
<line x1="2168" y1="524" x2="2915" y2="524" stroke="#e6e6e6" stroke-width="2"/>
<polygon points="2167,768 2167.0,767.0 2234.9,621.7 2302.9,633.8 2370.8,691.1 2438.9,694.2 2507.0,685.5 2572.8,706.4 2640.9,702.7 2708.8,684.8 2776.7,708.3 2844.9,671.9 2914.8,713.3 2914.8,768" fill="url(#ag)"/>
<polyline points="2167.0,767.0 2234.9,621.7 2302.9,633.8 2370.8,691.1 2438.9,694.2 2507.0,685.5 2572.8,706.4 2640.9,702.7 2708.8,684.8 2776.7,708.3 2844.9,671.9 2914.8,713.3" fill="none" stroke="#4a7ee8" stroke-width="4.2" stroke-linejoin="round" stroke-linecap="butt"/>
<line x1="2166" y1="768" x2="2916" y2="768" stroke="#ccd6eb" stroke-width="2"/>
<line x1="2167" y1="767" x2="2167" y2="787" stroke="#ccd6eb" stroke-width="2"/>
<line x1="2234.9" y1="767" x2="2234.9" y2="787" stroke="#ccd6eb" stroke-width="2"/>
<line x1="2302.9" y1="767" x2="2302.9" y2="787" stroke="#ccd6eb" stroke-width="2"/>
<line x1="2370.8" y1="767" x2="2370.8" y2="787" stroke="#ccd6eb" stroke-width="2"/>
<line x1="2438.9" y1="767" x2="2438.9" y2="787" stroke="#ccd6eb" stroke-width="2"/>
<line x1="2507" y1="767" x2="2507" y2="787" stroke="#ccd6eb" stroke-width="2"/>
<line x1="2572.8" y1="767" x2="2572.8" y2="787" stroke="#ccd6eb" stroke-width="2"/>
<line x1="2640.9" y1="767" x2="2640.9" y2="787" stroke="#ccd6eb" stroke-width="2"/>
<line x1="2708.8" y1="767" x2="2708.8" y2="787" stroke="#ccd6eb" stroke-width="2"/>
<line x1="2776.7" y1="767" x2="2776.7" y2="787" stroke="#ccd6eb" stroke-width="2"/>
<line x1="2844.9" y1="767" x2="2844.9" y2="787" stroke="#ccd6eb" stroke-width="2"/>
<line x1="2914.8" y1="767" x2="2914.8" y2="787" stroke="#ccd6eb" stroke-width="2"/>
<text x="2137.5" y="778.0" font-size="22.4" fill="#666666" text-anchor="end" textLength="13.4" lengthAdjust="spacingAndGlyphs">0</text>
<text x="2137.5" y="657.8" font-size="22.4" fill="#666666" text-anchor="end" textLength="25.5" lengthAdjust="spacingAndGlyphs">2k</text>
<text x="2137.5" y="534.0" font-size="22.4" fill="#666666" text-anchor="end" textLength="25.5" lengthAdjust="spacingAndGlyphs">4k</text>
<text x="2172.0" y="800" font-size="23" fill="#666666" text-anchor="end" transform="rotate(-45 2172.0 800)" textLength="92.5" lengthAdjust="spacingAndGlyphs">Jan 2021</text>
<text x="2239.9" y="800" font-size="23" fill="#666666" text-anchor="end" transform="rotate(-45 2239.9 800)" textLength="98.5" lengthAdjust="spacingAndGlyphs">Feb 2021</text>
<text x="2307.9" y="800" font-size="23" fill="#666666" text-anchor="end" transform="rotate(-45 2307.9 800)" textLength="99.8" lengthAdjust="spacingAndGlyphs">Mar 2021</text>
<text x="2375.8" y="800" font-size="23" fill="#666666" text-anchor="end" transform="rotate(-45 2375.8 800)" textLength="96.5" lengthAdjust="spacingAndGlyphs">Apr 2021</text>
<text x="2443.9" y="800" font-size="23" fill="#666666" text-anchor="end" transform="rotate(-45 2443.9 800)" textLength="103.6" lengthAdjust="spacingAndGlyphs">May 2021</text>
<text x="2512.0" y="800" font-size="23" fill="#666666" text-anchor="end" transform="rotate(-45 2512.0 800)" textLength="93.0" lengthAdjust="spacingAndGlyphs">Jun 2021</text>
<text x="2577.8" y="800" font-size="23" fill="#666666" text-anchor="end" transform="rotate(-45 2577.8 800)" textLength="85.5" lengthAdjust="spacingAndGlyphs">Jul 2021</text>
<text x="2645.9" y="800" font-size="23" fill="#666666" text-anchor="end" transform="rotate(-45 2645.9 800)" textLength="101.2" lengthAdjust="spacingAndGlyphs">Aug 2021</text>
<text x="2713.8" y="800" font-size="23" fill="#666666" text-anchor="end" transform="rotate(-45 2713.8 800)" textLength="99.7" lengthAdjust="spacingAndGlyphs">Sep 2021</text>
<text x="2781.7" y="800" font-size="23" fill="#666666" text-anchor="end" transform="rotate(-45 2781.7 800)" textLength="96.5" lengthAdjust="spacingAndGlyphs">Oct 2021</text>
<text x="2849.9" y="800" font-size="23" fill="#666666" text-anchor="end" transform="rotate(-45 2849.9 800)" textLength="101.1" lengthAdjust="spacingAndGlyphs">Nov 2021</text>
<text x="2919.8" y="800" font-size="23" fill="#666666" text-anchor="end" transform="rotate(-45 2919.8 800)" textLength="100.8" lengthAdjust="spacingAndGlyphs">Dec 2021</text>
<g fill="none" stroke="#93812e" stroke-width="2.8" stroke-linecap="round"><path d="M85.8 354.4 Q104.2 334.6 122.6 354.4 Q104.2 374.2 85.8 354.4 Z"/><path d="M109 349 A7 7 0 1 1 104.2 347.4"/></g><circle cx="104.2" cy="354.4" r="3.4" fill="#93812e"/>
<g fill="none" stroke="#3a7e8e" stroke-width="3.3" stroke-linecap="round" stroke-linejoin="round"><path d="M1074.1 338.4 L1075.7 343.7"/><path d="M1065.2 346.9 L1070.8 348.3"/><path d="M1081.4 345.7 L1085.9 341.7"/><path d="M1068 358.7 L1072.9 354.2"/><path d="M1076.8 350 L1095.5 357 L1088 360.2 L1083.8 368 Z"/><path d="M1088 360.2 L1095.8 368"/></g>
<g fill="none" stroke="#4e8f2d" stroke-width="2.9" stroke-linecap="round" stroke-linejoin="round"><ellipse cx="2059.9" cy="349.5" rx="15" ry="5"/><circle cx="2063.1" cy="342.3" r="4.8" fill="#bdf79f"/><path d="M2044.9 350 Q2045 358 2054 366 Q2055.5 368 2055.5 372.8 L2064.3 372.8 Q2064.3 368 2066 366 Q2075 358 2074.9 350"/></g><circle cx="2051" cy="337.9" r="2.2" fill="#4e8f2d"/>
<path d="M708.32 988.94 L707.47 985.54 L701.53 985.54 L700.68 988.94 L698.22 990.36 L694.85 989.40 L691.88 994.54 L694.40 996.98 L694.40 999.82 L691.88 1002.26 L694.85 1007.40 L698.22 1006.44 L700.68 1007.86 L701.53 1011.26 L707.47 1011.26 L708.32 1007.86 L710.78 1006.44 L714.15 1007.40 L717.12 1002.26 L714.60 999.82 L714.60 996.98 L717.12 994.54 L714.15 989.40 L710.78 990.36 Z" fill="#637079" stroke="#637079" stroke-width="1.6" stroke-linejoin="round"/><circle cx="704.5" cy="998.4" r="4.5" fill="#fff"/>
<g fill="none" stroke="#5d6472" stroke-width="3" stroke-linecap="round"><circle cx="79" cy="1219.8" r="7.6"/><path d="M84.8 1225.6 L93 1233.6"/></g>
<g fill="none" stroke="#2a3347" stroke-width="2.2"><rect x="2712.2" y="1204.2" width="12.5" height="8.3" rx="2"/><rect x="2730.2" y="1204.2" width="12.5" height="16.6" rx="2"/><rect x="2712.2" y="1218.3" width="12.5" height="16.6" rx="2"/><rect x="2730.2" y="1226.6" width="12.5" height="8.3" rx="2"/></g>
<g fill="none" stroke="#979ea8" stroke-width="1.7" stroke-linecap="round" stroke-linejoin="round" transform="translate(0.0 0)"><path d="M257.7 1307.2 V1327 M251.3 1320.4 L257.7 1327 L264 1320.4"/><path d="M268.3 1327 V1307 M262.2 1313.2 L268.3 1306.8 L274.6 1313.2"/></g>
<g fill="none" stroke="#979ea8" stroke-width="1.7" stroke-linecap="round" stroke-linejoin="round" transform="translate(221.5 0)"><path d="M257.7 1307.2 V1327 M251.3 1320.4 L257.7 1327 L264 1320.4"/><path d="M268.3 1327 V1307 M262.2 1313.2 L268.3 1306.8 L274.6 1313.2"/></g>
<g fill="none" stroke="#979ea8" stroke-width="1.7" stroke-linecap="round" stroke-linejoin="round" transform="translate(632.7 0)"><path d="M257.7 1307.2 V1327 M251.3 1320.4 L257.7 1327 L264 1320.4"/><path d="M268.3 1327 V1307 M262.2 1313.2 L268.3 1306.8 L274.6 1313.2"/></g>
<g fill="none" stroke="#979ea8" stroke-width="1.7" stroke-linecap="round" stroke-linejoin="round" transform="translate(872.7 0)"><path d="M257.7 1307.2 V1327 M251.3 1320.4 L257.7 1327 L264 1320.4"/><path d="M268.3 1327 V1307 M262.2 1313.2 L268.3 1306.8 L274.6 1313.2"/></g>
<g fill="none" stroke="#979ea8" stroke-width="1.7" stroke-linecap="round" stroke-linejoin="round" transform="translate(1068.7 0)"><path d="M257.7 1307.2 V1327 M251.3 1320.4 L257.7 1327 L264 1320.4"/><path d="M268.3 1327 V1307 M262.2 1313.2 L268.3 1306.8 L274.6 1313.2"/></g>
<g fill="none" stroke="#979ea8" stroke-width="1.7" stroke-linecap="round" stroke-linejoin="round" transform="translate(1268.7 0)"><path d="M257.7 1307.2 V1327 M251.3 1320.4 L257.7 1327 L264 1320.4"/><path d="M268.3 1327 V1307 M262.2 1313.2 L268.3 1306.8 L274.6 1313.2"/></g>
<g fill="none" stroke="#979ea8" stroke-width="1.7" stroke-linecap="round" stroke-linejoin="round" transform="translate(1445.7 0)"><path d="M257.7 1307.2 V1327 M251.3 1320.4 L257.7 1327 L264 1320.4"/><path d="M268.3 1327 V1307 M262.2 1313.2 L268.3 1306.8 L274.6 1313.2"/></g>
<g fill="none" stroke="#979ea8" stroke-width="1.7" stroke-linecap="round" stroke-linejoin="round" transform="translate(1650.7 0)"><path d="M257.7 1307.2 V1327 M251.3 1320.4 L257.7 1327 L264 1320.4"/><path d="M268.3 1327 V1307 M262.2 1313.2 L268.3 1306.8 L274.6 1313.2"/></g>
<g fill="none" stroke="#979ea8" stroke-width="1.7" stroke-linecap="round" stroke-linejoin="round" transform="translate(1853.7 0)"><path d="M257.7 1307.2 V1327 M251.3 1320.4 L257.7 1327 L264 1320.4"/><path d="M268.3 1327 V1307 M262.2 1313.2 L268.3 1306.8 L274.6 1313.2"/></g>
<g fill="none" stroke="#979ea8" stroke-width="1.7" stroke-linecap="round" stroke-linejoin="round" transform="translate(2059.7 0)"><path d="M257.7 1307.2 V1327 M251.3 1320.4 L257.7 1327 L264 1320.4"/><path d="M268.3 1327 V1307 M262.2 1313.2 L268.3 1306.8 L274.6 1313.2"/></g>
<g fill="none" stroke="#979ea8" stroke-width="1.7" stroke-linecap="round" stroke-linejoin="round" transform="translate(2260.7 0)"><path d="M257.7 1307.2 V1327 M251.3 1320.4 L257.7 1327 L264 1320.4"/><path d="M268.3 1327 V1307 M262.2 1313.2 L268.3 1306.8 L274.6 1313.2"/></g>
<g fill="none" stroke="#979ea8" stroke-width="1.7" stroke-linecap="round" stroke-linejoin="round" transform="translate(2557.7 0)"><path d="M257.7 1307.2 V1327 M251.3 1320.4 L257.7 1327 L264 1320.4"/><path d="M268.3 1327 V1307 M262.2 1313.2 L268.3 1306.8 L274.6 1313.2"/></g>
<path d="M691.5 1311 L710 1311 L700.8 1323 Z" fill="#111827"/>
<circle cx="2083" cy="1316.4" r="12" fill="#111827"/>
<text x="2083" y="1323.6" font-size="19" font-weight="700" fill="#fff" text-anchor="middle">?</text>
<circle cx="2491" cy="1316.4" r="12" fill="#111827"/>
<text x="2491" y="1323.6" font-size="19" font-weight="700" fill="#fff" text-anchor="middle">?</text>
<g fill="none" stroke="#67cf99" stroke-width="3" stroke-linecap="round"><path d="M388.6 1398.8 Q381 1410.3 388.6 1421.8"/><path d="M393.5 1402.8 Q388.5 1410.3 393.5 1417.8"/><path d="M417.4 1398.8 Q425 1410.3 417.4 1421.8"/><path d="M412.5 1402.8 Q417.5 1410.3 412.5 1417.8"/></g><path d="M397.5 1405.3 Q397.5 1402.3 400.5 1403.7 L408.6 1408.7 Q410.2 1410.3 408.6 1411.8999999999999 L400.5 1416.8999999999999 Q397.5 1418.3 397.5 1415.3 Z" fill="#67cf99"/>
<g fill="none" stroke="#67cf99" stroke-width="3" stroke-linecap="round"><path d="M388.6 1506.0 Q381 1517.5 388.6 1529.0"/><path d="M393.5 1510.0 Q388.5 1517.5 393.5 1525.0"/><path d="M417.4 1506.0 Q425 1517.5 417.4 1529.0"/><path d="M412.5 1510.0 Q417.5 1517.5 412.5 1525.0"/></g><path d="M397.5 1512.5 Q397.5 1509.5 400.5 1510.9 L408.6 1515.9 Q410.2 1517.5 408.6 1519.1 L400.5 1524.1 Q397.5 1525.5 397.5 1522.5 Z" fill="#67cf99"/>
<g fill="none" stroke="#67cf99" stroke-width="3" stroke-linecap="round"><path d="M388.6 1649.0 Q381 1660.5 388.6 1672.0"/><path d="M393.5 1653.0 Q388.5 1660.5 393.5 1668.0"/><path d="M417.4 1649.0 Q425 1660.5 417.4 1672.0"/><path d="M412.5 1653.0 Q417.5 1660.5 412.5 1668.0"/></g><path d="M397.5 1655.5 Q397.5 1652.5 400.5 1653.9 L408.6 1658.9 Q410.2 1660.5 408.6 1662.1 L400.5 1667.1 Q397.5 1668.5 397.5 1665.5 Z" fill="#67cf99"/>
<circle cx="403" cy="1805.5" r="16.5" fill="none" stroke="#e8913f" stroke-width="2.6"/><rect x="396.6" y="1797.5" width="4.6" height="15" rx="2.3" fill="#e8913f"/><rect x="404.8" y="1797.5" width="4.6" height="15" rx="2.3" fill="#e8913f"/>
<circle cx="-4" cy="1760" r="20" fill="#6bcf9a"/>
<rect x="1241.5" y="1777" width="77" height="14" rx="7" fill="#808080" stroke="#c4c4c4" stroke-width="1.6"/>
<circle cx="2927.7" cy="1740.5" r="38.5" fill="#fff" stroke="#e6e6e6" stroke-width="1.5" filter="url(#fsh)"/>
<defs><filter id="fsh" x="-30%" y="-30%" width="160%" height="160%"><feDropShadow dx="0" dy="1.5" stdDeviation="1.8" flood-color="#000" flood-opacity="0.18"/></filter></defs>
<defs><clipPath id="dclip"><rect x="-17.6" y="-17.6" width="35.2" height="35.2" rx="3.5"/></clipPath></defs>
<g transform="translate(2928 1740.5) rotate(45)" clip-path="url(#dclip)"><rect x="-17.6" y="-17.6" width="25.400000000000002" height="9.8" fill="#fdf577"/><rect x="7.8" y="-17.6" width="9.8" height="25.400000000000002" fill="#9cf76b"/><rect x="-7.8" y="7.8" width="25.400000000000002" height="9.8" fill="#6b93f6"/><rect x="-17.6" y="-7.8" width="9.8" height="25.400000000000002" fill="#e85a71"/></g>
</svg>
</body></html>
